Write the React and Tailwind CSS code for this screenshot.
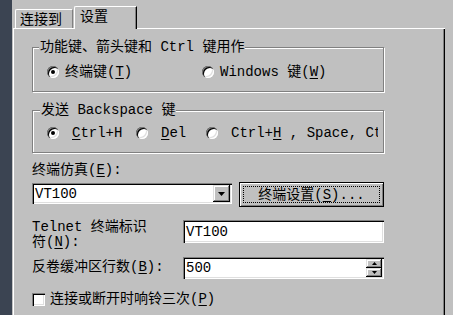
import React from "react";

const sunken =
  "bg-white shadow-[inset_1px_1px_0_#808080,inset_2px_2px_0_#000,inset_-1px_-1px_0_#fff,inset_-2px_-2px_0_#dfdfdf]";
const raised =
  "bg-[#c0c0c0] shadow-[inset_-1px_-1px_0_#000,inset_1px_1px_0_#dfdfdf,inset_-2px_-2px_0_#808080,inset_2px_2px_0_#fff]";
const etched =
  "border border-[#808080] shadow-[inset_1px_1px_0_#fff,1px_1px_0_#fff]";

function Radio({ checked }) {
  return (
    <span className="w-[12px] h-[12px] shrink-0 rounded-full bg-white flex items-center justify-center shadow-[inset_1px_1px_0_#808080,inset_2px_2px_0_#000,inset_-1px_-1px_0_#fff,inset_-2px_-2px_0_#dfdfdf]">
      {checked && <span className="w-[4px] h-[4px] rounded-full bg-black" />}
    </span>
  );
}

function U({ children }) {
  return <span className="underline decoration-1 underline-offset-[2px]">{children}</span>;
}

function Arrow({ w = 7, h = 4, up = false }) {
  return (
    <svg width={w} height={h} viewBox={`0 0 ${w} ${h}`}>
      <path
        d={up ? `M0 ${h}H${w}L${w / 2} 0Z` : `M0 0H${w}L${w / 2} ${h}Z`}
        fill="#000"
      />
    </svg>
  );
}

export default function App() {
  return (
    <div className="w-[453px] h-[315px] overflow-hidden flex bg-[#c0c0c0] text-black text-[14px] leading-[16px] [font-family:'Liberation_Mono','Noto_Sans_CJK_SC',monospace]">
      <div className="w-[12px] shrink-0 bg-[#3b4452]" />
      <div className="flex-1 flex flex-col pl-[1px] pr-[8px]">
        {/* tabs */}
        <div className="h-[29px] shrink-0 flex items-end">
          <div className="w-[61px] h-full flex items-end border-b border-white">
            <div className="ml-[2px] w-[58px] h-[19px] border-l border-t border-white border-r border-r-[#808080] rounded-tl-[2px] pl-[4px] pt-[2px] whitespace-nowrap">
              连接到
            </div>
          </div>
          <div className="w-[63px] h-[23px] border-l border-t border-white border-r border-r-black shadow-[inset_-1px_0_0_#808080] rounded-tl-[2px] pl-[5px] pt-[2px] whitespace-nowrap">
            设置
          </div>
          <div className="flex-1 h-full border-b border-white" />
        </div>

        {/* panel */}
        <div className="flex-1 border-l border-white border-r border-r-black shadow-[inset_-1px_0_0_#808080] pl-[18px] flex flex-col">
          {/* group 1 */}
          <div className={`mt-[18px] w-[352px] h-[45px] shrink-0 ${etched}`}>
            <div className="-mt-[9px] ml-[6px] w-fit px-[1px] bg-[#c0c0c0] whitespace-nowrap">
              功能键、箭头键和 Ctrl 键用作
            </div>
            <div className="mt-[9px] pl-[14px] flex items-center whitespace-nowrap">
              <label className="w-[155px] flex items-center gap-[6px]">
                <Radio checked />
                <span>
                  终端键(<U>T</U>)
                </span>
              </label>
              <label className="flex items-center gap-[6px]">
                <Radio />
                <span>
                  Windows 键(<U>W</U>)
                </span>
              </label>
            </div>
          </div>

          {/* group 2 */}
          <div className={`mt-[18px] w-[352px] h-[43px] shrink-0 ${etched}`}>
            <div className="-mt-[9px] ml-[7px] w-fit px-[1px] bg-[#c0c0c0] whitespace-nowrap">
              发送 Backspace 键
            </div>
            <div className="mt-[7px] pl-[14px] flex items-center whitespace-nowrap">
              <label className="w-[89px] flex items-center gap-[13px]">
                <Radio checked />
                <span>
                  <U>C</U>trl+H
                </span>
              </label>
              <label className="w-[70px] flex items-center gap-[13px]">
                <Radio />
                <span>
                  <U>D</U>el
                </span>
              </label>
              <label className="w-[172px] overflow-hidden flex items-center gap-[13px]">
                <Radio />
                <span>
                  Ctrl+<U>H</U> , Space, Ctrl+Space
                </span>
              </label>
            </div>
          </div>

          {/* emulation */}
          <div className="mt-[9px] whitespace-nowrap">
            终端仿真(<U>E</U>):
          </div>
          <div className="mt-[4px] flex items-start">
            <div className={`mt-[1px] w-[200px] h-[21px] flex items-center justify-between pl-[3px] pr-[2px] ${sunken}`}>
              <span>VT100</span>
              <div className={`w-[17px] h-[17px] flex items-center justify-center ${raised}`}>
                <Arrow />
              </div>
            </div>
            <button className="ml-[7px] w-[145px] h-[25px] border border-black p-[3px] flex bg-[#c0c0c0] shadow-[inset_1px_1px_0_#fff,inset_-1px_-1px_0_#808080]">
              <span className="flex-1 border border-dotted border-black flex items-center justify-center whitespace-nowrap">
                终端设置(<U>S</U>)...
              </span>
            </button>
          </div>

          {/* telnet id */}
          <div className="mt-[13px] flex items-start">
            <div className="w-[151px] h-[30px] leading-[15px] whitespace-nowrap">
              Telnet 终端标识
              <br />
              符(<U>N</U>):
            </div>
            <div className={`w-[201px] h-[23px] flex items-center pl-[3px] ${sunken}`}>VT100</div>
          </div>

          {/* buffer */}
          <div className="mt-[7px] flex items-center">
            <div className="w-[151px] -mt-[2px] whitespace-nowrap">
              反卷缓冲区行数(<U>B</U>):
            </div>
            <div className={`w-[201px] h-[22px] flex items-center justify-between pl-[3px] pr-[2px] ${sunken}`}>
              <span>500</span>
              <div className="flex flex-col">
                <div className={`w-[16px] h-[9px] flex items-center justify-center ${raised}`}>
                  <Arrow w={5} h={3} up />
                </div>
                <div className={`w-[16px] h-[9px] flex items-center justify-center ${raised}`}>
                  <Arrow w={5} h={3} />
                </div>
              </div>
            </div>
          </div>

          {/* checkbox */}
          <label className="mt-[12px] flex items-center gap-[5px] whitespace-nowrap">
            <span className={`w-[13px] h-[13px] shrink-0 ${sunken}`} />
            <span>
              连接或断开时响铃三次(<U>P</U>)
            </span>
          </label>
        </div>
      </div>
    </div>
  );
}
